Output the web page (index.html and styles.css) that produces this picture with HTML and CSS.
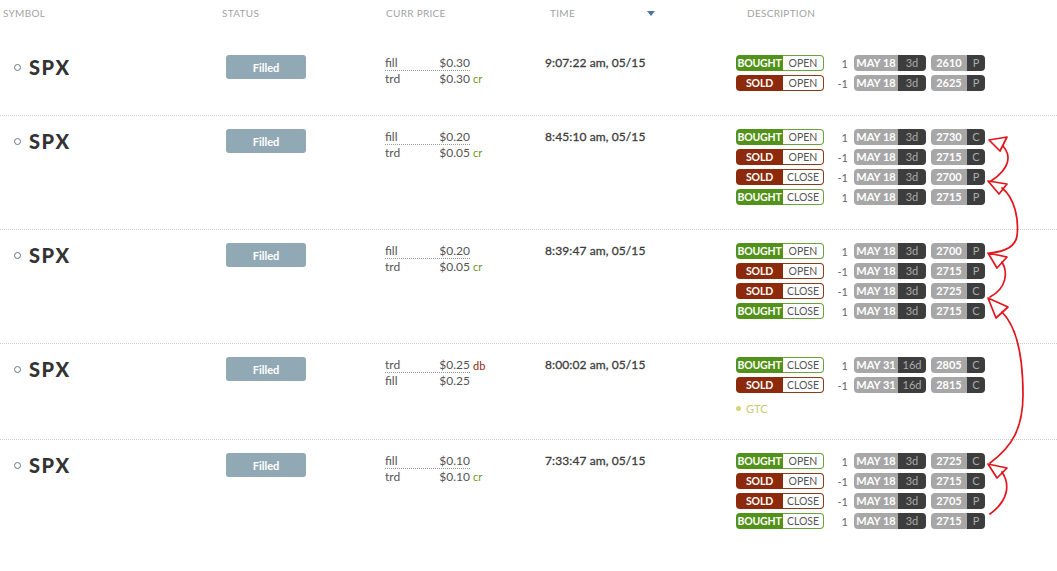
FILE: index.html
```html
<!DOCTYPE html>
<html>
<head>
<meta charset="utf-8">
<link rel="stylesheet" href="styles.css">
</head>
<body>
<div class="page">
  <div class="table">
    <div class="head">
      <div class="h h-sym">SYMBOL</div>
      <div class="h h-status">STATUS</div>
      <div class="h h-price">CURR PRICE</div>
      <div class="h h-time">TIME <span class="sort"></span></div>
      <div class="h h-desc">DESCRIPTION</div>
    </div>

    <div class="row">
      <div class="sym"><span class="ring"></span><span class="tkr">SPX</span></div>
      <div class="status"><span class="btn">Filled</span></div>
      <div class="price">
        <div class="pline first"><span class="pbox"><span class="lbl">fill</span><span class="val">$0.30</span></span></div>
        <div class="pline"><span class="pbox"><span class="lbl">trd</span><span class="val">$0.30</span></span><span class="sfx cr">cr</span></div>
      </div>
      <div class="time">9:07:22 am, 05/15</div>
      <div class="desc">
        <div class="legs">
          <div class="leg"><span class="lg buy">BOUGHT</span><span class="oc buy-b">OPEN</span><span class="qty">1</span><span class="dp"><span class="dl">MAY 18</span><span class="dd">3d</span></span><span class="sp"><span class="sl">2610</span><span class="sd">P</span></span></div>
          <div class="leg"><span class="lg sell">SOLD</span><span class="oc sell-b">OPEN</span><span class="qty">-1</span><span class="dp"><span class="dl">MAY 18</span><span class="dd">3d</span></span><span class="sp"><span class="sl">2625</span><span class="sd">P</span></span></div>
        </div>
      </div>
    </div>

    <div class="row sep">
      <div class="sym"><span class="ring"></span><span class="tkr">SPX</span></div>
      <div class="status"><span class="btn">Filled</span></div>
      <div class="price">
        <div class="pline first"><span class="pbox"><span class="lbl">fill</span><span class="val">$0.20</span></span></div>
        <div class="pline"><span class="pbox"><span class="lbl">trd</span><span class="val">$0.05</span></span><span class="sfx cr">cr</span></div>
      </div>
      <div class="time">8:45:10 am, 05/15</div>
      <div class="desc">
        <div class="legs">
          <div class="leg"><span class="lg buy">BOUGHT</span><span class="oc buy-b">OPEN</span><span class="qty">1</span><span class="dp"><span class="dl">MAY 18</span><span class="dd">3d</span></span><span class="sp"><span class="sl">2730</span><span class="sd">C</span></span></div>
          <div class="leg"><span class="lg sell">SOLD</span><span class="oc sell-b">OPEN</span><span class="qty">-1</span><span class="dp"><span class="dl">MAY 18</span><span class="dd">3d</span></span><span class="sp"><span class="sl">2715</span><span class="sd">C</span></span></div>
          <div class="leg"><span class="lg sell">SOLD</span><span class="oc sell-b">CLOSE</span><span class="qty">-1</span><span class="dp"><span class="dl">MAY 18</span><span class="dd">3d</span></span><span class="sp"><span class="sl">2700</span><span class="sd">P</span></span></div>
          <div class="leg"><span class="lg buy">BOUGHT</span><span class="oc buy-b">CLOSE</span><span class="qty">1</span><span class="dp"><span class="dl">MAY 18</span><span class="dd">3d</span></span><span class="sp"><span class="sl">2715</span><span class="sd">P</span></span></div>
        </div>
      </div>
    </div>

    <div class="row sep">
      <div class="sym"><span class="ring"></span><span class="tkr">SPX</span></div>
      <div class="status"><span class="btn">Filled</span></div>
      <div class="price">
        <div class="pline first"><span class="pbox"><span class="lbl">fill</span><span class="val">$0.20</span></span></div>
        <div class="pline"><span class="pbox"><span class="lbl">trd</span><span class="val">$0.05</span></span><span class="sfx cr">cr</span></div>
      </div>
      <div class="time">8:39:47 am, 05/15</div>
      <div class="desc">
        <div class="legs">
          <div class="leg"><span class="lg buy">BOUGHT</span><span class="oc buy-b">OPEN</span><span class="qty">1</span><span class="dp"><span class="dl">MAY 18</span><span class="dd">3d</span></span><span class="sp"><span class="sl">2700</span><span class="sd">P</span></span></div>
          <div class="leg"><span class="lg sell">SOLD</span><span class="oc sell-b">OPEN</span><span class="qty">-1</span><span class="dp"><span class="dl">MAY 18</span><span class="dd">3d</span></span><span class="sp"><span class="sl">2715</span><span class="sd">P</span></span></div>
          <div class="leg"><span class="lg sell">SOLD</span><span class="oc sell-b">CLOSE</span><span class="qty">-1</span><span class="dp"><span class="dl">MAY 18</span><span class="dd">3d</span></span><span class="sp"><span class="sl">2725</span><span class="sd">C</span></span></div>
          <div class="leg"><span class="lg buy">BOUGHT</span><span class="oc buy-b">CLOSE</span><span class="qty">1</span><span class="dp"><span class="dl">MAY 18</span><span class="dd">3d</span></span><span class="sp"><span class="sl">2715</span><span class="sd">C</span></span></div>
        </div>
      </div>
    </div>

    <div class="row sep">
      <div class="sym"><span class="ring"></span><span class="tkr">SPX</span></div>
      <div class="status"><span class="btn">Filled</span></div>
      <div class="price">
        <div class="pline first"><span class="pbox"><span class="lbl">trd</span><span class="val">$0.25</span></span><span class="sfx db">db</span></div>
        <div class="pline"><span class="pbox"><span class="lbl">fill</span><span class="val">$0.25</span></span></div>
      </div>
      <div class="time">8:00:02 am, 05/15</div>
      <div class="desc">
        <div class="legs">
          <div class="leg"><span class="lg buy">BOUGHT</span><span class="oc buy-b">CLOSE</span><span class="qty">1</span><span class="dp"><span class="dl">MAY 31</span><span class="dd">16d</span></span><span class="sp"><span class="sl">2805</span><span class="sd">C</span></span></div>
          <div class="leg"><span class="lg sell">SOLD</span><span class="oc sell-b">CLOSE</span><span class="qty">-1</span><span class="dp"><span class="dl">MAY 31</span><span class="dd">16d</span></span><span class="sp"><span class="sl">2815</span><span class="sd">C</span></span></div>
        </div>
        <div class="gtc"><span class="gdot"></span>GTC</div>
      </div>
    </div>

    <div class="row sep">
      <div class="sym"><span class="ring"></span><span class="tkr">SPX</span></div>
      <div class="status"><span class="btn">Filled</span></div>
      <div class="price">
        <div class="pline first"><span class="pbox"><span class="lbl">fill</span><span class="val">$0.10</span></span></div>
        <div class="pline"><span class="pbox"><span class="lbl">trd</span><span class="val">$0.10</span></span><span class="sfx cr">cr</span></div>
      </div>
      <div class="time">7:33:47 am, 05/15</div>
      <div class="desc">
        <div class="legs">
          <div class="leg"><span class="lg buy">BOUGHT</span><span class="oc buy-b">OPEN</span><span class="qty">1</span><span class="dp"><span class="dl">MAY 18</span><span class="dd">3d</span></span><span class="sp"><span class="sl">2725</span><span class="sd">C</span></span></div>
          <div class="leg"><span class="lg sell">SOLD</span><span class="oc sell-b">OPEN</span><span class="qty">-1</span><span class="dp"><span class="dl">MAY 18</span><span class="dd">3d</span></span><span class="sp"><span class="sl">2715</span><span class="sd">C</span></span></div>
          <div class="leg"><span class="lg sell">SOLD</span><span class="oc sell-b">CLOSE</span><span class="qty">-1</span><span class="dp"><span class="dl">MAY 18</span><span class="dd">3d</span></span><span class="sp"><span class="sl">2705</span><span class="sd">P</span></span></div>
          <div class="leg"><span class="lg buy">BOUGHT</span><span class="oc buy-b">CLOSE</span><span class="qty">1</span><span class="dp"><span class="dl">MAY 18</span><span class="dd">3d</span></span><span class="sp"><span class="sl">2715</span><span class="sd">P</span></span></div>
        </div>
      </div>
    </div>
  </div>

  <svg class="arrows" width="1057" height="571" viewBox="0 0 1057 571" xmlns="http://www.w3.org/2000/svg">
    <g fill="none" stroke="#e3141c" stroke-width="1.7" stroke-linejoin="round" stroke-linecap="round">
      <path d="M989,140 L1007,137 L1000,151 Z"/>
      <path d="M1003,146 C1011,155 1011,168 991,181"/>
      <path d="M988,181 L1007,184 L999,194 Z"/>
      <path d="M1002,188 C1015,198 1019,220 1017,236 C1015,248 1002,252 990,253"/>
      <path d="M988,253 L1007,257 L997,268 Z"/>
      <path d="M1002,262 C1008,272 1007,288 990,297"/>
      <path d="M988,298 L1008,307 L996,318 Z"/>
      <path d="M1002,312 C1018,328 1023,360 1023,395 C1023,428 1012,447 990,463"/>
      <path d="M988,464 L1007,468 L997,478 Z"/>
      <path d="M1002,472 C1010,484 1009,500 990,514"/>
    </g>
  </svg>
</div>
</body>
</html>
```

FILE: styles.css
```css
html, body {
  margin: 0;
  padding: 0;
  background: #ffffff;
}

body {
  font-family: Lato, "Open Sans", "Liberation Sans", sans-serif;
  color: #555555;
}

.page {
  position: relative;
  width: 1057px;
  height: 571px;
  overflow: hidden;
}

.table {
  display: flex;
  flex-direction: column;
}

.head,
.row {
  display: grid;
  grid-template-columns: 222px 163px 160px 191px 1fr;
}

.head {
  height: 42px;
  align-items: start;
}

.h {
  padding-top: 7px;
  font-size: 10px;
  line-height: 12px;
  color: #a3a3a3;
  letter-spacing: 0.3px;
  text-transform: uppercase;
}

.h-sym { padding-left: 3px; }
.h-status { padding-left: 0; }
.h-price { padding-left: 1px; }
.h-time { padding-left: 5px; display: flex; align-items: center; }
.h-desc { padding-left: 11px; }

.sort {
  display: inline-block;
  width: 0;
  height: 0;
  margin-left: 72px;
  margin-top: 1px;
  border-left: 4.5px solid transparent;
  border-right: 4.5px solid transparent;
  border-top: 5px solid #4f76a0;
}

.row {
  padding: 13px 0 24px;
  align-items: start;
}

.row.sep {
  border-top: 1px dotted #cfcfcf;
}

.sym {
  display: flex;
  align-items: center;
  height: 24px;
  padding-left: 14px;
}

.ring {
  width: 5px;
  height: 5px;
  border: 1.5px solid #61798a;
  border-radius: 50%;
  margin-right: 8px;
  margin-top: 1px;
}

.tkr {
  font-size: 20px;
  font-weight: 900;
  color: #333333;
  letter-spacing: 1.6px;
}

.status {
  padding-left: 4px;
}

.btn {
  display: flex;
  align-items: center;
  justify-content: center;
  width: 80px;
  height: 24px;
  border-radius: 3px;
  background: #91a9b5;
  color: #ffffff;
  font-size: 11px;
  font-weight: 700;
}

.price {
  font-size: 12px;
  line-height: 15px;
  color: #555555;
}

.pline {
  display: flex;
  align-items: flex-end;
}

.pbox {
  display: flex;
  width: 85px;
}

.pline.first .pbox {
  border-bottom: 1px dotted #9a9a9a;
}

.lbl {
  width: 55px;
}

.sfx {
  margin-left: 3px;
  font-size: 11px;
}

.cr { color: #6e9a1c; }
.db { color: #8f2a12; }

.time {
  font-size: 12px;
  line-height: 15px;
  font-weight: 400;
  color: #3c3c3c;
  -webkit-text-stroke: 0.3px #3c3c3c;
  letter-spacing: 0.1px;
}

.desc {
  display: flex;
  flex-direction: column;
}

.legs {
  display: flex;
  flex-direction: column;
  gap: 4px;
}

.leg {
  display: flex;
  align-items: center;
  height: 16px;
}

.lg {
  box-sizing: border-box;
  width: 47px;
  height: 16px;
  line-height: 16px;
  border-radius: 4px 0 0 4px;
  color: #ffffff;
  font-size: 10.5px;
  font-weight: 700;
  letter-spacing: -0.2px;
  text-align: center;
  white-space: nowrap;
  overflow: hidden;
}

.buy { background: #52921a; }
.sell { background: #8c2a0b; }

.oc {
  box-sizing: border-box;
  width: 41px;
  height: 16px;
  line-height: 14px;
  border: 1px solid;
  border-left: 0;
  border-radius: 0 4px 4px 0;
  background: #ffffff;
  color: #555555;
  font-size: 10.5px;
  text-align: center;
}

.buy-b { border-color: #6aa33a; }
.sell-b { border-color: #8c3a1e; }

.qty {
  width: 24px;
  margin-right: 6px;
  text-align: right;
  font-size: 11px;
  color: #666666;
}

.dp,
.sp {
  display: flex;
  height: 16px;
  line-height: 16px;
  border-radius: 4px;
  overflow: hidden;
  font-size: 11px;
  text-align: center;
}

.sp {
  margin-left: 5px;
}

.dl { width: 44px; }
.dd { width: 28px; }
.sl { width: 36px; }
.sd { width: 18px; }

.dl,
.sl {
  background: #a7a7a7;
  color: #ffffff;
  font-weight: 700;
}

.dd,
.sd {
  background: #3d3d3d;
  color: #ababab;
}

.gtc {
  display: flex;
  align-items: center;
  margin-top: 8px;
  height: 14px;
  font-size: 11px;
  color: #c9cc70;
}

.gdot {
  width: 5px;
  height: 5px;
  border-radius: 50%;
  background: #d3d67b;
  margin-right: 5px;
}

.arrows {
  position: absolute;
  top: 0;
  left: 0;
  pointer-events: none;
}
```
